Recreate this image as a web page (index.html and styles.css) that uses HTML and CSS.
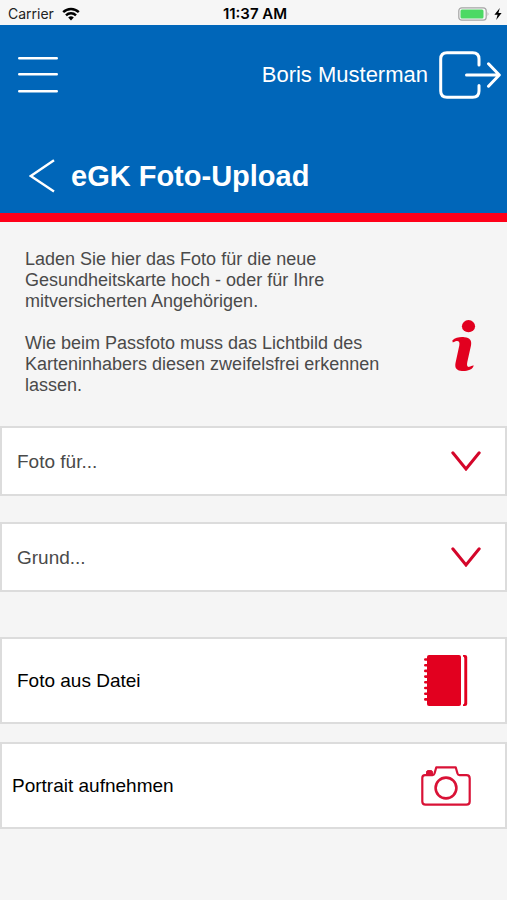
FILE: index.html
```html
<!DOCTYPE html>
<html lang="de">

<head>
    <meta charset="UTF-8">
    <meta name="viewport" content="width=device-width, initial-scale=1.0">
    <title>eGK Foto-Upload</title>
    <link rel="stylesheet" href="styles.css">
</head>

<body>

    <div class="status-bar">
        <div class="status-left">
            <span>Carrier</span>
            <svg width="18" height="14" viewBox="0 0 18 14" fill="none" stroke="#000" stroke-width="2.4">
                <path d="M1.2 5.2A11 11 0 0 1 16.8 5.2" />
                <path d="M4 8.4A7 7 0 0 1 14 8.4" />
                <path d="M9 13.4L6.2 10.6A4 4 0 0 1 11.8 10.6Z" fill="#000" stroke="none" />
            </svg>
        </div>
        <span class="status-time">11:37 AM</span>
        <div class="status-right">
            <svg width="32" height="14" viewBox="0 0 32 14">
                <rect x="0.8" y="0.8" width="27.4" height="12.4" rx="3" fill="#f6f6f6" stroke="#a5a5a5" stroke-width="1.2" />
                <rect x="2.5" y="2.5" width="23" height="9" rx="1.5" fill="#4cd964" />
                <path d="M29.6 4.8Q31.4 7 29.6 9.2Z" fill="#a5a5a5" />
            </svg>
            <svg width="8" height="12" viewBox="0 0 8 12">
                <path d="M5.8 0L0.4 6.8H3.6L2.2 12L7.6 4.9H4.4Z" fill="#000" />
            </svg>
        </div>
    </div>

    <header class="header">
        <nav class="top-row">
            <button type="button" class="icon-btn" aria-label="Menü">
                <svg width="40" height="38" viewBox="0 0 40 38" stroke="#fff" stroke-width="2.4" stroke-linecap="round">
                    <path d="M1.2 2.2H38.8M1.2 18.2H38.8M1.2 35.2H38.8" />
                </svg>
            </button>
            <a href="#" class="logout">
                <span>Boris Musterman</span>
                <svg width="62" height="48" viewBox="0 0 62 48" fill="none" stroke="#fff" stroke-width="3" stroke-linecap="round" stroke-linejoin="round">
                    <path d="M40 14V8Q40 1.7 33.7 1.7H8Q1.7 1.7 1.7 8V40Q1.7 46.3 8 46.3H33.7Q40 46.3 40 40V34.5" />
                    <path d="M27.5 24H60M49.5 12.8L60.3 24L49.5 35.2" />
                </svg>
            </a>
        </nav>
        <div class="title-row">
            <a href="#" class="icon-btn" aria-label="Zurück">
                <svg width="26" height="34" viewBox="0 0 26 34" fill="none" stroke="#fff" stroke-width="2.4">
                    <path d="M25 1.2L1.8 17L25 32.4" />
                </svg>
            </a>
            <h1>eGK Foto-Upload</h1>
        </div>
    </header>

    <main>
        <section class="info">
            <div class="info-text">
                <p>Laden Sie hier das Foto für die neue Gesundheitskarte hoch - oder für Ihre mitversicherten Angehörigen.</p>
                <p>Wie beim Passfoto muss das Lichtbild des Karteninhabers diesen zweifelsfrei erkennen lassen.</p>
            </div>
            <button type="button" class="icon-btn info-btn" aria-label="Information">
                <svg width="24" height="52" viewBox="0 0 24 52" fill="#e2001f">
                    <ellipse cx="16.5" cy="6.2" rx="6.6" ry="6.1" />
                    <path d="M0.3 20.5C3.5 17.5 8 16.7 12.5 17.2C18 17.6 20 20.5 19 25.5L15.3 42C14.6 45.5 15.2 47.3 17.3 46.8C18.7 46.5 19.8 45.8 21.6 45.3C21.7 47.2 20.2 48.8 17.8 49.8C15 51 11.5 51.3 8.3 50.8C4 50 2.7 47.3 3.5 43L7.3 25.5C8 22 6.7 20.7 4.5 21C3 21.3 2.2 22 0.8 22.5Z" />
                </svg>
            </button>
        </section>

        <form class="upload-form">
            <div class="select-box">
                <select id="person" aria-label="Foto für">
                    <option value="" selected>Foto für...</option>
                </select>
                <svg width="30" height="20" viewBox="0 0 30 20" fill="none" stroke="#d4062a" stroke-width="3" stroke-linecap="round">
                    <path d="M1.8 1.8L15 18L28.2 1.8" />
                </svg>
            </div>
            <div class="select-box">
                <select id="reason" aria-label="Grund">
                    <option value="" selected>Grund...</option>
                </select>
                <svg width="30" height="20" viewBox="0 0 30 20" fill="none" stroke="#d4062a" stroke-width="3" stroke-linecap="round">
                    <path d="M1.8 1.8L15 18L28.2 1.8" />
                </svg>
            </div>

            <div class="actions">
                <button type="button" class="action file">
                    <span>Foto aus Datei</span>
                    <svg width="44" height="52" viewBox="0 0 44 52" fill="#e2001f">
                        <path d="M5 0H35Q37 0 37 2V49Q37 51 35 51H5Q3 51 3 49V2Q3 0 5 0Z" />
                        <path d="M39 0H41Q43.2 0 43.2 2V49Q43.2 51 41 51H39V49.5Q40.3 49.5 40.3 47.5V3.5Q40.3 1.5 39 1.5Z" />
                        <path d="M1.3 4.5H4M1.3 10.2H4M1.3 15.9H4M1.3 21.6H4M1.3 27.3H4M1.3 33H4M1.3 38.7H4M1.3 44.4H4" stroke="#e2001f" stroke-width="2.6" stroke-linecap="round" />
                    </svg>
                </button>
                <button type="button" class="action camera">
                    <span>Portrait aufnehmen</span>
                    <svg width="50" height="40" viewBox="0 0 50 40" fill="none" stroke="#d91236" stroke-width="2.2" stroke-linejoin="round">
                        <path d="M4 9.2H11.5Q13 9.2 13.5 7.5L15.3 1.3H34.7L36.5 7.5Q37 9.2 38.5 9.2H45.5Q48.7 9.2 48.7 12.4V35.5Q48.7 38.7 45.5 38.7H4.5Q1.3 38.7 1.3 35.5V12Q1.3 9.2 4 9.2Z" />
                        <circle cx="25" cy="22" r="10.4" stroke-width="2.6" />
                        <path d="M5.5 8V6.2Q5.5 4.6 7 4.6H10Q11.5 4.6 11.5 6.2V8Z" fill="#d91236" stroke-width="1" />
                    </svg>
                </button>
            </div>
        </form>
    </main>

</body>

</html>
```
FILE: styles.css
```css
* {
    box-sizing: border-box;
}

body {
    font-family: "Liberation Sans", Arial, sans-serif;
    font-size: 19px;
    background-color: #f5f5f5;
    margin: 0;
}

svg {
    display: block;
    flex-shrink: 0;
}

.status-bar {
    display: grid;
    grid-template-columns: 1fr auto 1fr;
    align-items: center;
    height: 25px;
    padding: 2px 5px 0 8px;
    background-color: #f6f6f6;
    color: #222;
    font-family: Inter, sans-serif;
    font-size: 14px;
}

.status-left,
.status-right {
    display: flex;
    align-items: center;
    gap: 8px;
}

.status-right {
    justify-content: flex-end;
    gap: 4px;
}

.status-time {
    font-size: 15px;
    font-weight: 600;
    color: #000;
}

.header {
    background-color: #0066b9;
    border-bottom: 9px solid #ff0019;
    color: white;
}

.top-row {
    display: flex;
    align-items: center;
    justify-content: space-between;
    height: 100px;
    padding: 0 6px 0 18px;
}

.icon-btn {
    padding: 0;
    background: none;
    border: none;
    cursor: pointer;
}

.logout {
    display: flex;
    align-items: center;
    gap: 11px;
    color: white;
    font-size: 22px;
    text-decoration: none;
}

.title-row {
    display: flex;
    align-items: center;
    gap: 16px;
    height: 88px;
    padding: 14px 29px 0;
}

.title-row h1 {
    margin: 0;
    font-size: 29px;
}

.info {
    display: flex;
    align-items: flex-end;
    justify-content: space-between;
    padding: 27px 31px 30px 25px;
    color: #4a4a4a;
    font-size: 18px;
    line-height: 21px;
}

.info-text {
    max-width: 370px;
}

.info-text p {
    margin: 0;
}

.info-text p + p {
    margin-top: 21px;
}

.info-btn {
    margin-bottom: 24px;
}

.select-box {
    display: grid;
    align-items: center;
    margin-bottom: 26px;
}

.select-box select,
.select-box svg {
    grid-area: 1 / 1;
}

.select-box select {
    appearance: none;
    width: 100%;
    height: 70px;
    padding: 0 60px 0 15px;
    background-color: white;
    border: 2px solid #dcdcdc;
    border-radius: 0;
    color: #4a4a4a;
    font: inherit;
}

.select-box svg {
    justify-self: end;
    margin-right: 26px;
    pointer-events: none;
}

.actions {
    display: grid;
    gap: 18px;
    padding-top: 19px;
}

.action {
    display: flex;
    align-items: center;
    justify-content: space-between;
    width: 100%;
    height: 87px;
    background-color: white;
    border: 2px solid #dcdcdc;
    color: black;
    font: inherit;
    cursor: pointer;
}

.file {
    padding: 0 37px 0 15px;
}

.camera {
    padding: 0 34px 0 10px;
}
```
